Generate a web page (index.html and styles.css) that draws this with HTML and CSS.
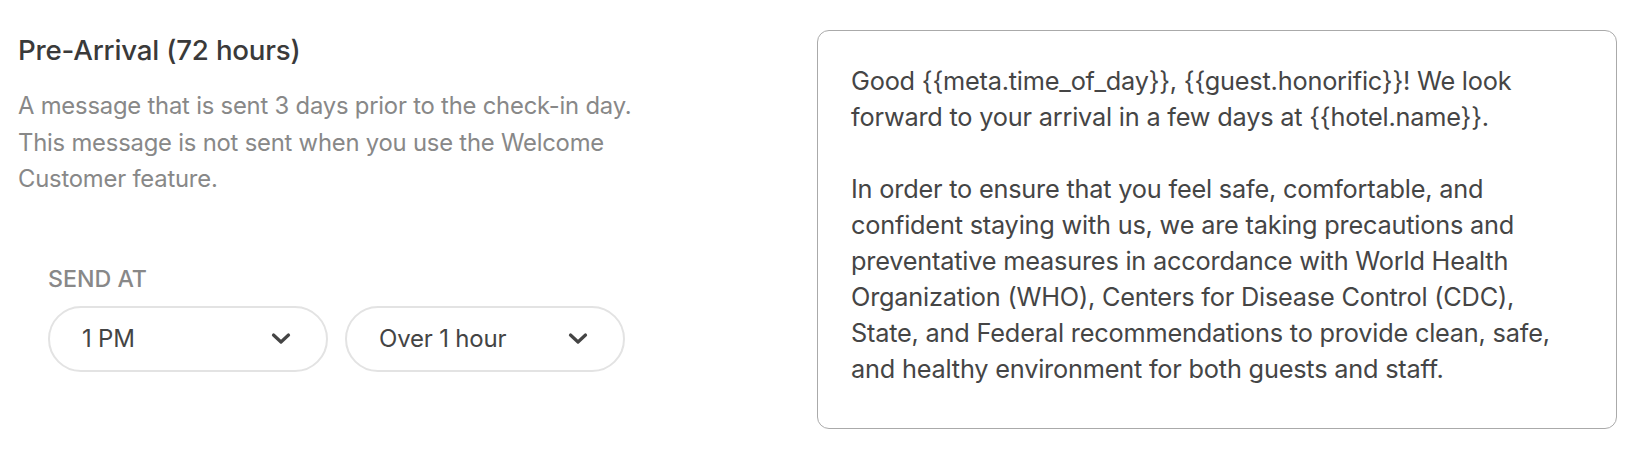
FILE: index.html
```html
<!DOCTYPE html>
<html>
<head>
<meta charset="utf-8">
<link rel="stylesheet" href="styles.css">
</head>
<body>
<div class="page">
  <section class="info">
    <h2 class="title">Pre-Arrival (72 hours)</h2>
    <p class="desc">A message that is sent 3 days prior to the check-in day. This message is not sent when you use the Welcome Customer feature.</p>
    <div class="send">
      <div class="label">SEND AT</div>
      <div class="selects">
        <div class="select">
          <span>1 PM</span>
          <svg class="chev" width="22" height="14" viewBox="0 0 22 14"><path d="M3.5 3 L11 10 L18.5 3" fill="none" stroke="#444" stroke-width="3.2" stroke-linecap="round" stroke-linejoin="round"/></svg>
        </div>
        <div class="select">
          <span>Over 1 hour</span>
          <svg class="chev" width="22" height="14" viewBox="0 0 22 14"><path d="M3.5 3 L11 10 L18.5 3" fill="none" stroke="#444" stroke-width="3.2" stroke-linecap="round" stroke-linejoin="round"/></svg>
        </div>
      </div>
    </div>
  </section>
  <div class="message">
    <p>Good {{meta.time_of_day}}, {{guest.honorific}}! We look forward to your arrival in a few days at {{hotel.name}}.</p>
    <p>In order to ensure that you feel safe, comfortable, and confident staying with us, we are taking precautions and preventative measures in accordance with World Health Organization (WHO), Centers for Disease Control (CDC), State, and Federal recommendations to provide clean, safe, and healthy environment for both guests and staff.</p>
  </div>
</div>
</body>
</html>
```
FILE: styles.css
```css
* { box-sizing: border-box; }
html, body { margin: 0; padding: 0; background: #fff; }
body { font-family: Inter, "Liberation Sans", Arial, sans-serif; }
.page {
  display: flex;
  padding: 30px 29px 0 18px;
}
.info {
  width: 799px;
  flex: none;
}
.title {
  margin: 5px 0 0;
  font-size: 27.7px;
  line-height: 30px;
  font-weight: 500;
  color: #3a3a3a;
  letter-spacing: -0.2px;
}
.desc {
  margin: 23px 0 0;
  width: 652px;
  font-size: 23.8px;
  line-height: 36.5px;
  color: #888;
  letter-spacing: -0.2px;
}
.send {
  margin: 69px 0 0 30px;
}
.label {
  font-size: 23.2px;
  line-height: 24px;
  font-weight: 500;
  color: #888;
}
.selects {
  display: flex;
  gap: 17px;
  margin-top: 15px;
}
.select {
  width: 280px;
  height: 66px;
  border: 2px solid #e3e3e3;
  border-radius: 33px;
  display: flex;
  align-items: center;
  justify-content: space-between;
  padding: 0 34px 0 32px;
  font-size: 24px;
  color: #444;
  letter-spacing: -0.2px;
}
.chev { display: block; }
.message {
  width: 800px;
  height: 399px;
  flex: none;
  border: 1.5px solid #aaa;
  border-radius: 12px;
  padding: 32px 33px;
  font-size: 25.3px;
  line-height: 36px;
  color: #454545;
  letter-spacing: -0.2px;
}
.message p { margin: 0 0 36px; }
```
